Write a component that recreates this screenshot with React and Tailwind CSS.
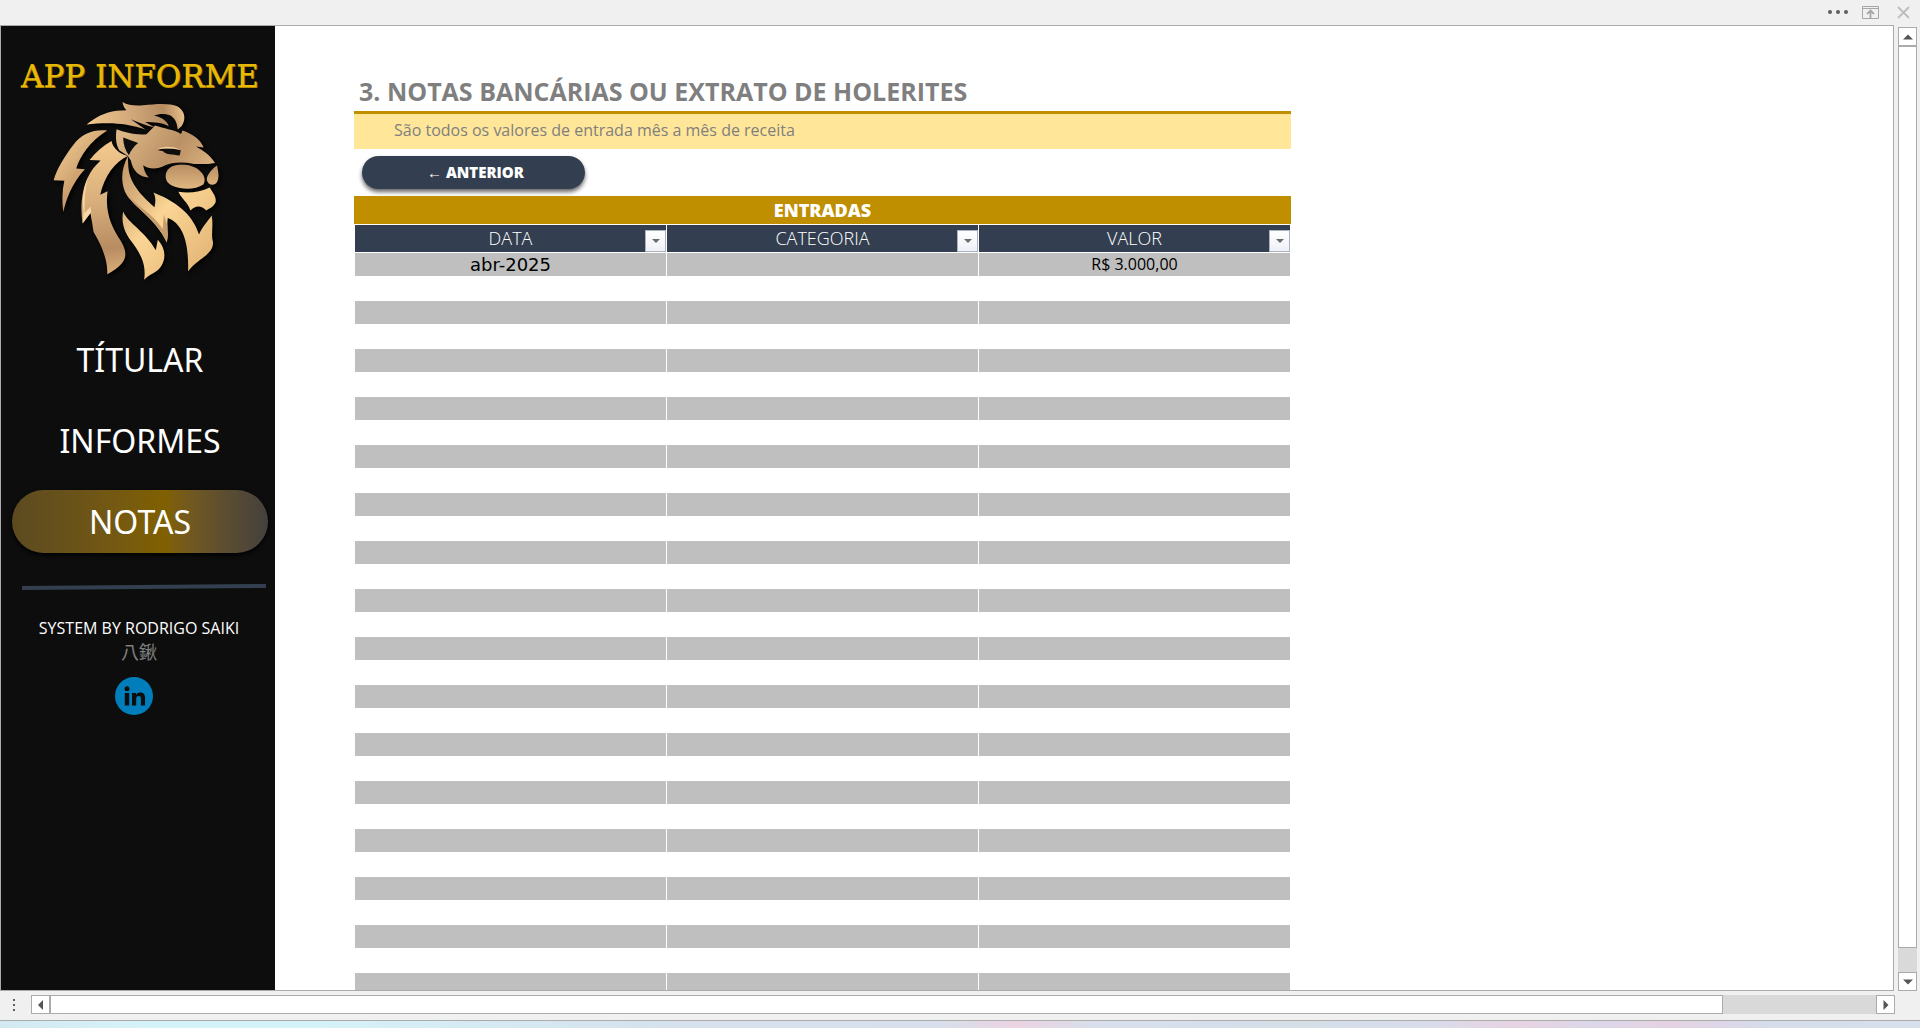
const NAV = [
  { label: 'TÍTULAR', active: false },
  { label: 'INFORMES', active: false },
  { label: 'NOTAS', active: true },
];

const COLUMNS = ['DATA', 'CATEGORIA', 'VALOR'];

const ROWS = Array.from({ length: 31 }, (_, i) =>
  i === 0 ? ['abr-2025', '', 'R$ 3.000,00'] : ['', '', '']
);

function Lion() {
  return (
    <svg viewBox="150 180 520 548" className="w-[173px] drop-shadow-[2px_2px_2px_#000]" role="img" aria-label="Leão">
      <defs>
        <linearGradient id="gold" gradientUnits="userSpaceOnUse" x1="170" y1="250" x2="640" y2="640">
          <stop offset="0" stopColor="#c79f6c" />
          <stop offset="0.14" stopColor="#e2b983" />
          <stop offset="0.32" stopColor="#c09363" />
          <stop offset="0.48" stopColor="#d2a877" />
          <stop offset="0.68" stopColor="#fbd595" />
          <stop offset="1" stopColor="#e4b777" />
        </linearGradient>
        <linearGradient id="face" gradientUnits="userSpaceOnUse" x1="380" y1="260" x2="640" y2="440">
          <stop offset="0" stopColor="#dcb684" />
          <stop offset="0.5" stopColor="#ba9065" />
          <stop offset="1" stopColor="#e5bd88" />
        </linearGradient>
        <linearGradient id="muzzle" gradientUnits="userSpaceOnUse" x1="560" y1="375" x2="560" y2="450">
          <stop offset="0" stopColor="#b98e63" />
          <stop offset="1" stopColor="#e2b983" />
        </linearGradient>
        <linearGradient id="tuft" gradientUnits="userSpaceOnUse" x1="260" y1="250" x2="550" y2="210">
          <stop offset="0" stopColor="#f2c88e" />
          <stop offset="0.5" stopColor="#cfa678" />
          <stop offset="0.8" stopColor="#b58b62" />
          <stop offset="1" stopColor="#e8be88" />
        </linearGradient>
        <linearGradient id="mane" gradientUnits="userSpaceOnUse" x1="300" y1="330" x2="340" y2="700">
          <stop offset="0" stopColor="#f0c68c" />
          <stop offset="0.4" stopColor="#d9b07c" />
          <stop offset="0.8" stopColor="#b88c62" />
          <stop offset="1" stopColor="#d8ad78" />
        </linearGradient>
      </defs>
      <path fill="url(#tuft)" d="M368 186C384 196 406 198 430 196C470 191 512 189 532 199C556 212 560 238 546 258L534 269C532 250 526 232 508 225C492 220 476 222 463 227C486 231 502 242 507 259C488 248 462 246 436 246L465 263C440 258 418 248 393 238L437 269C400 256 360 250 325 250C300 250 280 251 260 254C285 232 315 217 350 212L380 211C373 204 369 196 368 186Z" />
      <path fill="url(#gold)" d="M322 272C282 268 246 280 220 315C195 347 170 388 161 421L193 423C186 455 186 488 190 517C198 482 214 432 255 388L229 386C240 350 270 304 322 272Z" />
      <path fill="url(#mane)" d="M335 303C339 325 358 341 384 348C346 366 314 406 301 465L323 454C314 520 338 566 362 602C388 644 382 672 322 704C325 660 302 612 281 577L272 520L248 551C240 500 246 450 264 412C274 392 285 378 302 362L269 360C288 336 310 317 335 303Z" />
      <path fill="#f6d7a5" d="M264 412C250 445 246 480 251 515L248 551L272 519L276 545L272 500L254 520C253 480 256 445 264 412Z" />
      <path fill="url(#face)" d="M350 268C375 277 405 286 440 283L466 257C492 267 520 268 544 282L548 272C578 282 603 300 612 323L589 320C612 334 630 344 646 369C622 374 598 372 574 372C540 367 513 369 490 380C467 389 446 387 430 376C433 392 438 403 447 413C420 412 399 395 393 362L384 348L358 331C347 312 347 290 350 268Z" />
      <path fill="#0d0d0d" d="M370 293L415 309C402 319 394 330 387 346C376 331 370 313 370 293Z" />
      <path fill="#0d0d0d" d="M473 330C490 321 520 326 543 331L540 347C518 343 499 345 490 334Z" />
      <path fill="#f3d29d" d="M473 329C490 317 520 319 543 330C520 325 495 324 473 329Z" />
      <path fill="url(#muzzle)" d="M535 375C504 378 494 400 499 418C506 448 580 456 611 434C624 415 605 386 570 377C556 373 545 373 535 375Z" />
      <path fill="none" stroke="#0d0d0d" strokeWidth="5" d="M490 382C513 370 545 368 580 374" />
      <path fill="url(#muzzle)" d="M652 377C638 386 622 404 621 419C624 438 646 440 653 425C660 409 655 394 652 377Z" />
      <path fill="url(#gold)" d="M536 456C570 462 602 456 630 443C638 458 651 470 648 487C642 501 628 506 620 512C604 496 588 497 572 512C563 485 548 482 536 456Z" />
      <path fill="url(#gold)" d="M384 349C365 385 362 422 375 455C398 502 466 532 501 608C508 582 500 560 504 535C545 550 568 600 565 695C600 652 641 645 640 608C633 584 642 560 636 527C624 545 608 560 598 584C580 532 545 492 461 458C468 471 468 486 464 502C425 466 386 430 385 372Z" />
      <path fill="#c79c6c" d="M375 455C398 502 466 532 501 608C504 590 501 575 502 555L492 524L489 568C460 520 402 494 375 455Z" />
      <path fill="url(#gold)" d="M370 515C384 550 440 578 468 632L474 600C496 624 500 652 485 678C472 700 450 702 433 720C440 672 421 642 400 612C374 580 363 550 370 515Z" />
    </svg>
  );
}

function LinkedIn() {
  return (
    <svg viewBox="0 0 38 38" className="size-[38px]" aria-hidden="true">
      <circle cx="19" cy="19" r="19" fill="#007ebb" />
      <g fill="#0d0d0d">
        <circle cx="12" cy="11.7" r="2.5" />
        <rect x="9.8" y="16" width="4.4" height="12.5" />
        <path d="M17 16h4v1.900c1-1.500 2.400-2.300 4.300-2.300 3.500 0 4.800 2.100 4.800 5.600v7.300h-4.200v-6.600c0-1.900-.5-2.900-2.100-2.900-1.800 0-2.600 1.200-2.600 3v6.500H17z" />
      </g>
    </svg>
  );
}

function ScrollButton({ label, points }) {
  return (
    <button aria-label={label} className="flex size-[19px] shrink-0 items-center justify-center border border-[#ababab] bg-white">
      <svg viewBox="0 0 10 10" className="size-[10px]" fill="#555">
        <polygon points={points} />
      </svg>
    </button>
  );
}

export default function App() {
  return (
    <div className="flex h-screen flex-col overflow-hidden bg-[#f0f0f0] font-['Open_Sans',sans-serif]">
      <header className="flex h-[25px] shrink-0 items-center justify-end gap-3 pr-2.5 pb-px">
        <button aria-label="Mais opções" className="mr-0.5 flex gap-1">
          <span className="size-1 rounded-full bg-[#5e5e5e]" />
          <span className="size-1 rounded-full bg-[#5e5e5e]" />
          <span className="size-1 rounded-full bg-[#5e5e5e]" />
        </button>
        <button aria-label="Opções de exibição">
          <svg viewBox="0 0 17 13" className="h-[13px] w-[17px]" fill="none" stroke="#a6a6a6">
            <path d="M.5.5h16v12H.5zM1 2.500h15" />
            <path d="M8.500 12V4.500M5 8l3.500-3.500L12 8" strokeWidth="1.800" />
          </svg>
        </button>
        <button aria-label="Fechar" className="ml-1.5">
          <svg viewBox="0 0 13 13" className="size-[13px]" fill="none" stroke="#bdbdbd" strokeWidth="1.800">
            <path d="M1 1l11 11M12 1L1 12" />
          </svg>
        </button>
      </header>

      <div className="flex min-h-0 flex-1">
        <div className="flex min-w-0 flex-1 overflow-hidden border border-[#ababab] bg-white">
          <aside className="flex w-[274px] shrink-0 flex-col items-center bg-[#0d0d0d] pt-8 text-white">
            <h1 className="pl-1 font-['DejaVu_Serif',serif] text-[31px] leading-9 whitespace-nowrap text-[#e8b808] [text-shadow:0_1px_0_#b98c00,1px_1px_0_#8a6500]">
              APP INFORME
            </h1>
            <div className="mt-1.5 pr-1">
              <Lion />
            </div>
            <nav className="mt-[46px] flex w-full flex-col gap-[18px] pr-[7px] pl-[11px] font-['Noto_Sans',sans-serif]">
              {NAV.map(({ label, active }) => (
                <button
                  key={label}
                  className={
                    active
                      ? 'h-[63px] rounded-full bg-linear-to-r from-[#5c4a20] via-[#806000] via-60% to-[#44403c] text-[32px] shadow-[0_2px_4px_#000]'
                      : 'h-[63px] rounded-full text-[32px]'
                  }
                >
                  {label}
                </button>
              ))}
            </nav>
            <svg viewBox="0 0 244 6" className="mt-[31px] ml-3 h-[6px] w-[244px]" aria-hidden="true">
              <path d="M0 4L244 2" stroke="#333f50" strokeWidth="4" />
            </svg>
            <p className="mt-[26px] pl-0.5 text-base leading-6">SYSTEM BY RODRIGO SAIKI</p>
            <p className="pl-0.5 font-['Noto_Sans_CJK_JP',sans-serif] text-lg leading-[22px] text-[#7f7f7f]">八鍬</p>
            <a href="#linkedin" aria-label="LinkedIn" className="mt-[15px] mr-2">
              <LinkedIn />
            </a>
          </aside>

          <main className="min-w-0 flex-1 overflow-hidden pt-[46px] pl-[79px]">
            <div className="w-[937px]">
              <h2 className="h-[39px] pl-[5px] text-[25px] leading-[38px] font-bold whitespace-nowrap text-[#7f7f7f]">
                3. NOTAS BANCÁRIAS OU EXTRATO DE HOLERITES
              </h2>
              <p className="h-[38px] border-t-3 border-[#bf8f00] bg-[#ffe699] pl-10 text-base leading-8 text-[#7f7f7f]">
                São todos os valores de entrada mês a mês de receita
              </p>
              <button className="mt-[7px] ml-2 block h-[33px] w-[223px] rounded-full bg-[#333f50] pl-1 text-[15px] font-extrabold text-white shadow-[0_3px_4px_#0009]">
                ← ANTERIOR
              </button>
              <table className="mt-[7px] w-full table-fixed border-separate border-spacing-px text-center">
                <caption className="h-7 bg-[#bf8f00] text-lg leading-7 font-extrabold text-white">ENTRADAS</caption>
                <thead>
                  <tr>
                    {COLUMNS.map((name) => (
                      <th key={name} className="relative h-[27px] bg-[#333f50] p-0 text-lg leading-[27px] font-light text-white">
                        {name}
                        <button
                          aria-label={'Filtrar ' + name}
                          className="absolute right-0 bottom-0 flex h-[22px] w-[21px] items-center justify-center border border-[#a9b2bf] bg-linear-to-b from-white to-[#eef1f7]"
                        >
                          <svg viewBox="0 0 8 4" className="h-1 w-2" fill="#6b6b6b">
                            <polygon points="0,0 8,0 4,4" />
                          </svg>
                        </button>
                      </th>
                    ))}
                  </tr>
                </thead>
                <tbody className="text-black">
                  {ROWS.map((row, i) => (
                    <tr key={i} className="odd:bg-[#bfbfbf]">
                      <td className="h-[23px] p-0 font-['DejaVu_Sans',sans-serif] text-lg leading-[23px]">{row[0]}</td>
                      <td className="h-[23px] p-0" />
                      <td className="h-[23px] p-0 text-base leading-[23px]">{row[2]}</td>
                    </tr>
                  ))}
                </tbody>
              </table>
            </div>
          </main>
        </div>

        <div className="ml-1 flex w-[22px] shrink-0 flex-col pt-0.5">
          <ScrollButton label="Rolar para cima" points="5,2.500 10,7.500 0,7.500" />
          <div className="flex w-[19px] flex-1 flex-col bg-[#d9d9d9]">
            <div className="h-[97.400%] border border-[#ababab] bg-white" />
          </div>
          <ScrollButton label="Rolar para baixo" points="5,7.500 10,2.500 0,2.500" />
        </div>
      </div>

      <div className="flex h-[29px] shrink-0 pt-1 pr-[25px]">
        <div className="flex w-[31px] shrink-0 flex-col items-center gap-[3px] pt-1 pr-1" aria-hidden="true">
          <span className="size-0.5 bg-[#5e5e5e]" />
          <span className="size-0.5 bg-[#5e5e5e]" />
          <span className="size-0.5 bg-[#5e5e5e]" />
        </div>
        <ScrollButton label="Rolar para a esquerda" points="2,5 7,0 7,10" />
        <div className="flex h-[19px] flex-1 bg-[#d9d9d9]">
          <div className="w-[91.600%] border border-[#ababab] bg-white" />
        </div>
        <ScrollButton label="Rolar para a direita" points="7.500,5 2.500,0 2.500,10" />
      </div>
      <div className="h-2 shrink-0 border-t border-[#ababab] bg-[linear-gradient(to_right,#d3e9f1,#d5f2f7_7%,#d5f2f7_17%,#d6e2ec_34%,#d8dfeb_49%,#ecd3e2_53%,#d8dfeb_57%,#d4dfe8_68%,#d8dcea_74%,#e8d3e3_79%,#dcd8e8_83%,#e5d2e4_87%,#d6dcea_92%,#d6e0ec)]" />
    </div>
  );
}
